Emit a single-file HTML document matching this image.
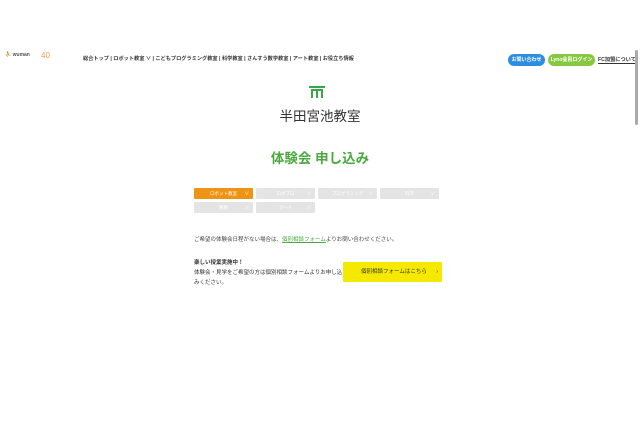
<!DOCTYPE html>
<html><head><meta charset="utf-8"><style>
*{margin:0;padding:0;box-sizing:border-box}
body{width:640px;height:427px;background:#fff;font-family:"Liberation Sans","Noto Sans CJK JP",sans-serif;color:#333;position:relative;overflow:hidden}
.a{position:absolute}
.nav{left:83px;top:55px;font-size:5.2px;color:#333;white-space:nowrap;font-weight:bold}
.btn{top:54px;height:12px;border-radius:6px;color:#fff;font-size:5px;font-weight:bold;text-align:center;line-height:12px}
.tab{height:11px;background:#e4e4e4;color:#fff;font-size:4.5px;text-align:center;line-height:11px;border-radius:1px}
.tab.on{background:#ee9414}
.tab span{position:absolute;right:4px;top:0}
</style></head><body>
<div class="a" style="left:5px;top:52px;font-size:5px;color:#666">⛹ <b style="color:#555">wuman</b></div>
<div class="a" style="left:41px;top:51px;font-size:8px;color:#e9a04b">40</div>
<div class="a nav">総合トップ | ロボット教室 ∨ | こどもプログラミング教室 | 科学教室 | さんすう数学教室 | アート教室 | お役立ち情報</div>
<div class="a btn" style="left:508px;width:37px;background:#2d8de0">お問い合わせ</div>
<div class="a btn" style="left:548px;width:47px;background:#86c940">Lyno会員ログイン</div>
<div class="a" style="left:598px;top:56px;font-size:5.2px;font-weight:bold;border-bottom:1px solid #333">FC加盟について</div>
<div class="a" style="left:635px;top:50px;width:3px;height:75px;background:#aaa;border-radius:2px"></div>
<div class="a" style="left:309px;top:86px;width:16px;height:2px;background:#3aa64a"></div>
<div class="a" style="left:311px;top:89px;width:12px;height:9px;border:2px solid #3aa64a;border-bottom:none"></div>
<div class="a" style="left:316px;top:90px;width:2px;height:8px;background:#3aa64a"></div>
<div class="a" style="left:0;width:640px;top:105px;text-align:center;font-size:13.5px;color:#333">半田宮池教室</div>
<div class="a" style="left:0;width:640px;top:147px;text-align:center;font-size:13.5px;font-weight:bold;color:#4aa93f">体験会 申し込み</div>
<div class="a tab on" style="left:194px;top:188px;width:59px">ロボット教室<span>∨</span></div>
<div class="a tab" style="left:256px;top:188px;width:59px">ロボプロ<span>∨</span></div>
<div class="a tab" style="left:318px;top:188px;width:59px">プログラミング<span>∨</span></div>
<div class="a tab" style="left:380px;top:188px;width:59px">科学<span>∨</span></div>
<div class="a tab" style="left:194px;top:202px;width:59px">算数<span>∨</span></div>
<div class="a tab" style="left:256px;top:202px;width:59px">アート<span>∨</span></div>
<div class="a" style="left:194px;top:235px;font-size:5.5px;color:#444">ご希望の体験会日程がない場合は、<span style="color:#4aa93f;text-decoration:underline">個別相談フォーム</span>よりお問い合わせください。</div>
<div class="a" style="left:194px;top:258px;font-size:5.5px;line-height:10px;color:#333;font-weight:bold">楽しい授業実施中！<br><span style="font-weight:normal">体験会・見学をご希望の方は個別相談フォームよりお申し込<br>みください。</span></div>
<div class="a" style="left:343px;top:262px;width:99px;height:20px;background:#f6e900;font-size:5.5px;line-height:20px;color:#333"><span style="margin-left:18px">個別相談フォームはこちら</span><span style="position:absolute;right:4px">›</span></div>
</body></html>
